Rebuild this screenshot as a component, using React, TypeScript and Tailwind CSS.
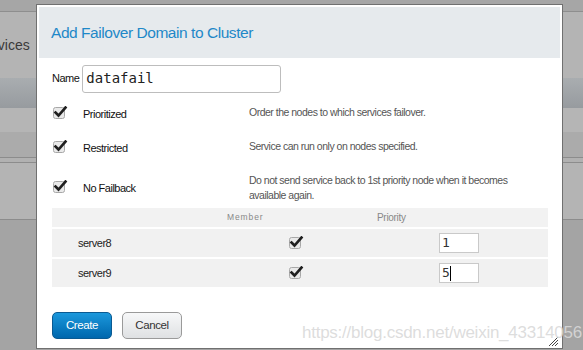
import React from "react";

const sans = "font-['Liberation_Sans',Arial,sans-serif]";
const mono = "font-['DejaVu_Sans_Mono','Liberation_Mono',monospace]";

function Check() {
  return (
    <svg width="15" height="13" viewBox="0 0 15 13" className="block">
      <rect x="0.5" y="1.5" width="11" height="11" rx="2" fill="#e9e9e9" stroke="#a8a8a8" />
      <path d="M2.5 6.5 L5.5 9.5 L12.5 1.5" fill="none" stroke="#1f1f1f" strokeWidth="2.6" strokeLinecap="square" />
    </svg>
  );
}

const options = [
  { label: "Prioritized", desc: "Order the nodes to which services failover.", h: "h-[34px]", d: "pt-0" },
  { label: "Restricted", desc: "Service can run only on nodes specified.", h: "h-[40px]", d: "pt-0" },
  {
    label: "No Failback",
    desc: "Do not send service back to 1st priority node when it becomes available again.",
    h: "h-[29px]",
    d: "-mt-[6px]",
  },
];

const servers = [
  { name: "server8", priority: "1", caret: false },
  { name: "server9", priority: "5", caret: true },
];

export default function App() {
  return (
    <div className={`relative w-[583px] h-[350px] overflow-hidden bg-[#a4a4a4] ${sans}`}>
      {/* page behind the modal */}
      <div className="flex flex-col">
        <div className="h-[12px] bg-[#a6a6a6] border-b border-[#8e8e8e]" />
        <div className="h-[66px] bg-[#b4b4b4] flex items-center gap-[9px]">
          <span className="text-[14px] text-[#3a3a3a] -ml-[24px]">Services</span>
          <div className="w-[12px] h-[20px] rounded-l-[6px] border border-[#999] border-r-0" />
        </div>
        <div className="h-[30px] bg-gradient-to-b from-[#a9adb0] to-[#979b9f]" />
        <div className="h-[24px] bg-[#b5b5b5]" />
        <div className="h-[26px] bg-[#ababab] border-b border-[#8c8c8c]" />
        <div className="h-[5px] bg-[#b1b1b1] border-b border-[#8c8c8c]" />
        <div className="h-[57px] bg-[#b4b4b4] border-b border-[#8c8c8c]" />
      </div>

      {/* modal */}
      <div className="absolute left-[36px] top-[4px] w-[527px] h-[345px] bg-white border border-[#707070] p-[2px] flex flex-col">
        <div className="h-[51px] bg-[#e6eaed] flex items-center pl-[12px]">
          <h1 className="text-[15.5px] text-[#1e88c8] tracking-[-0.45px]">
            Add Failover Domain to Cluster
          </h1>
        </div>

        <div className="pl-[13px] pt-[6px] flex flex-col">
          <div className="flex items-center gap-[3px] h-[29px]">
            <span className="text-[11px] tracking-[-0.5px] text-[#111]">Name</span>
            <div className={`${mono} w-[199px] h-[28px] border border-[#bdbdbd] rounded-[3px] flex items-center pl-[3px] text-[14px] text-[#222]`}>
              datafail
            </div>
          </div>

          <div className="flex flex-col mt-[12px]">
            {options.map((o) => (
              <div key={o.label} className={`flex ${o.h}`}>
                <div className="w-[31px] pl-[1px] pt-[1px]">
                  <Check />
                </div>
                <div className="w-[166px] text-[11px] leading-[15px] tracking-[-0.5px] text-[#111] pt-[2px]">
                  {o.label}
                </div>
                <div className={`w-[264px] text-[10.5px] leading-[15px] tracking-[-0.5px] text-[#555] ${o.d}`}>
                  {o.desc}
                </div>
              </div>
            ))}
          </div>

          {/* nodes table */}
          <div className="w-[496px] flex flex-col gap-[2px]">
            <div className="h-[19px] bg-[#f2f2f2] flex items-center text-[#888]">
              <span className="w-[150px] ml-[175px] text-[8.5px] tracking-[0.9px]">Member</span>
              <span className="text-[10px] tracking-[-0.3px]">Priority</span>
            </div>
            {servers.map((s) => (
              <div key={s.name} className="h-[28px] bg-[#f1f1f1] flex items-center">
                <span className="w-[237px] pl-[26px] text-[11px] tracking-[-0.5px] text-[#222]">{s.name}</span>
                <div className="w-[150px] -mt-[2px]">
                  <Check />
                </div>
                <div className={`${mono} w-[40px] h-[20px] bg-white border border-[#c9c9c9] flex items-center pl-[2px] text-[13px] text-[#333]`}>
                  {s.priority}
                  {s.caret && <span className="w-[1px] h-[15px] bg-black" />}
                </div>
              </div>
            ))}
          </div>

          <div className="flex gap-[10px] mt-[25px]">
            <button className="w-[60px] h-[27px] rounded-[5px] border border-[#0a5a92] bg-gradient-to-b from-[#1b98dc] to-[#0067ad] text-white text-[11.5px] tracking-[-0.4px]">
              Create
            </button>
            <button className="w-[60px] h-[27px] rounded-[5px] border border-[#9a9a9a] bg-gradient-to-b from-[#f7f8f9] to-[#dfe1e3] text-[#333] text-[11.5px] tracking-[-0.4px]">
              Cancel
            </button>
          </div>
        </div>

        {/* resize grip */}
        <svg width="12" height="12" viewBox="0 0 12 12" className="absolute right-[3px] bottom-[1px]">
          <path d="M11 2 L2 11 M11 5 L5 11 M11 8 L8 11" stroke="#444" strokeWidth="1" />
        </svg>
      </div>

      {/* watermark */}
      <div className="absolute left-[302px] top-[320px] text-[17px] tracking-[-0.25px] text-[#d9d9d9]/90 whitespace-nowrap pointer-events-none">
        https://blog.csdn.net/weixin_43314056
      </div>
    </div>
  );
}
